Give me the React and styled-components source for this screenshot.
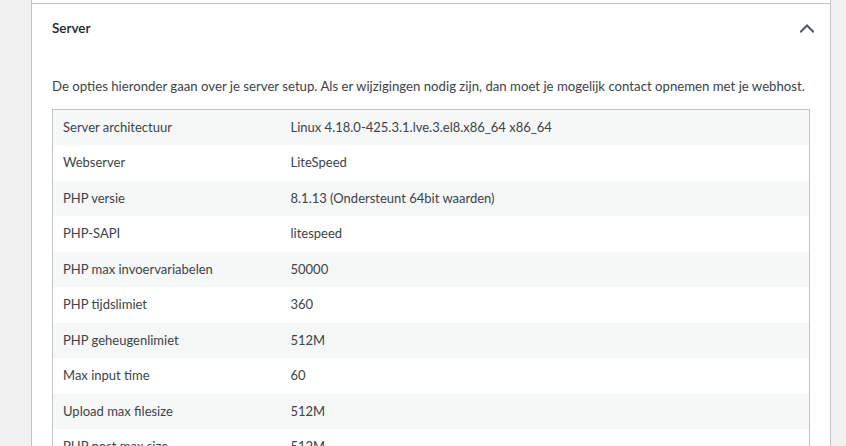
import React from 'react'
import styled, { createGlobalStyle } from 'styled-components'

const GlobalStyle = createGlobalStyle`
  body {
    margin: 0;
    background: #f0f0f1;
    font-family: "Segoe UI", Lato, "Noto Sans", sans-serif;
    color: #3c434a;
    overflow: hidden;
  }
`

const Page = styled.div`
  padding: 0 15px 0 31px;
  height: 446px;
`

const Accordion = styled.div`
  background: #fff;
  border-left: 1px solid #c3c4c7;
  border-right: 1px solid #c3c4c7;
  height: 100%;
`

const PrevItem = styled.div`
  height: 3px;
`

const Item = styled.section`
  border-top: 1px solid #c3c4c7;
`

const Header = styled.button`
  display: flex;
  align-items: center;
  justify-content: space-between;
  width: 100%;
  height: 47px;
  padding: 0 16px 0 20px;
  border: 0;
  background: transparent;
  font-family: inherit;
  font-size: 13.5px;
  font-weight: 600;
  color: #1d2327;
  cursor: pointer;
`

const Panel = styled.div`
  padding: 26px 20px 0;
`

const Intro = styled.p`
  margin: 0 0 12px;
  font-size: 13.2px;
  line-height: 19.5px;
  color: #3c434a;
  white-space: nowrap;
`

const Table = styled.table`
  width: 100%;
  table-layout: fixed;
  border-collapse: collapse;
  border: 1px solid #c3c4c7;
  font-size: 13px;
`

const LabelCol = styled.col`
  width: 228px;
`

const Row = styled.tr`
  background: ${p => (p.$odd ? '#f6f7f7' : '#fff')};
`

const Cell = styled.td`
  padding: 8px 10px;
  line-height: 19.5px;
  color: #3c434a;
  vertical-align: top;
  white-space: nowrap;
`

const Chevron = () => (
  <svg width="14" height="14" viewBox="0 0 14 14" fill="none">
    <path d="M1 10.5 L7 4.5 L13 10.5" stroke="#50575e" strokeWidth="2" strokeLinecap="square" />
  </svg>
)

const rows = [
  ['Server architectuur', 'Linux 4.18.0-425.3.1.lve.3.el8.x86_64 x86_64'],
  ['Webserver', 'LiteSpeed'],
  ['PHP versie', '8.1.13 (Ondersteunt 64bit waarden)'],
  ['PHP-SAPI', 'litespeed'],
  ['PHP max invoervariabelen', '50000'],
  ['PHP tijdslimiet', '360'],
  ['PHP geheugenlimiet', '512M'],
  ['Max input time', '60'],
  ['Upload max filesize', '512M'],
  ['PHP post max size', '512M'],
]

const App = () => {
  return (
    <Page>
      <GlobalStyle />
      <Accordion>
        <PrevItem />
        <Item>
          <Header>
            <span>Server</span>
            <Chevron />
          </Header>
          <Panel>
            <Intro>
              De opties hieronder gaan over je server setup. Als er wijzigingen nodig zijn, dan moet je mogelijk contact opnemen met je webhost.
            </Intro>
            <Table>
              <colgroup>
                <LabelCol />
                <col />
              </colgroup>
              <tbody>
                {rows.map(([label, value], i) => (
                  <Row key={label} $odd={i % 2 === 0}>
                    <Cell>{label}</Cell>
                    <Cell>{value}</Cell>
                  </Row>
                ))}
              </tbody>
            </Table>
          </Panel>
        </Item>
      </Accordion>
    </Page>
  )
}

export default App
